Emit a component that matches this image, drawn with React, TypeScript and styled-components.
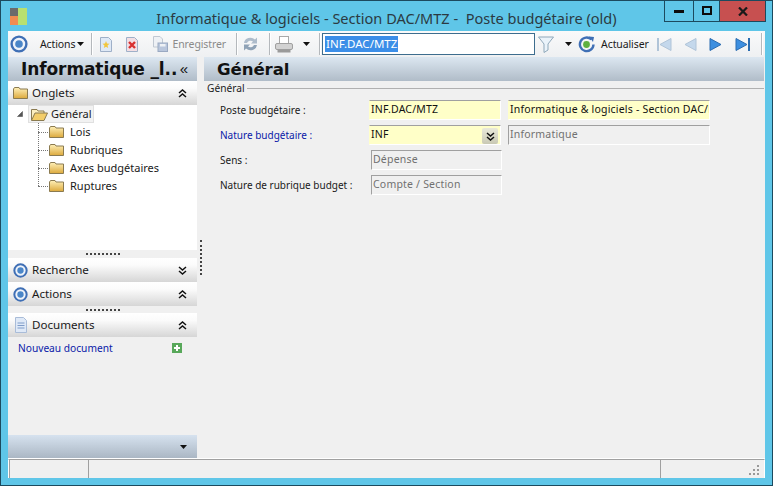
import React, { FunctionComponent } from 'react'
import styled, { createGlobalStyle } from 'styled-components'

const Global = createGlobalStyle`
    html, body, #root {
        margin: 0;
        padding: 0;
        width: 773px;
        height: 486px;
        overflow: hidden;
    }
    * { box-sizing: border-box; }
`

const Frame = styled.div`
    width: 773px;
    height: 486px;
    display: flex;
    flex-direction: column;
    background: #5fc6e8;
    border: 1px solid #1c4a5e;
    font-family: 'Noto Sans', 'Open Sans', sans-serif;
    font-size: 11px;
    color: #1a1a1a;
`
const TitleBar = styled.div`
    position: relative;
    height: 30px;
    flex: none;
    display: flex;
    align-items: center;
    justify-content: center;
    font-size: 14.55px;
    color: #2b3a42;
    white-space: pre;
    padding-top: 3px;
`
const AppLogo = styled.svg`
    position: absolute;
    left: 9px;
    top: 7px;
`
const WindowButtons = styled.div`
    position: absolute;
    top: 0;
    right: 6px;
    display: flex;
    height: 21px;
    border: 1px solid #1c4a5e;
    border-top: 0;
`
const WindowButton = styled.div<{ $w: number; $close?: boolean }>`
    width: ${p => p.$w}px;
    display: flex;
    align-items: center;
    justify-content: center;
    background: ${p => (p.$close ? '#c75050' : 'transparent')};
    border-left: 1px solid #1c4a5e;
    &:first-child { border-left: 0; }
`
const Body = styled.div`
    flex: 1;
    margin: 0 7px;
    display: flex;
    flex-direction: column;
    background: #f0f0f0;
    min-height: 0;
`
const Toolbar = styled.div`
    height: 26px;
    flex: none;
    display: flex;
    align-items: center;
    padding-left: 2px;
    background: linear-gradient(#fafafa, #eef0f2);
`
const ToolItem = styled.div<{ $ml?: number; $disabled?: boolean }>`
    display: flex;
    align-items: center;
    margin-left: ${p => p.$ml ?? 0}px;
    color: ${p => (p.$disabled ? '#8a8a8a' : '#1a1a1a')};
    font-size: 10.5px;
    letter-spacing: -0.1px;
    white-space: nowrap;
`
const ToolSep = styled.div<{ $ml: number }>`
    width: 1px;
    height: 22px;
    margin-left: ${p => p.$ml}px;
    background: #b4b8bc;
    box-shadow: 1px 0 0 #fff;
`
const SearchInput = styled.div`
    width: 213px;
    height: 22px;
    margin-left: 2px;
    padding: 2px 0 0 2px;
    background: #fff;
    border: 1px solid #3d6d8e;
    font-size: 11.5px;
    color: #fff;
    line-height: 16px;
`
const Selected = styled.span`
    display: inline-block;
    background: #3b8ee8;
    height: 16px;
    padding: 0 1px;
`
const Main = styled.div`
    flex: 1;
    display: flex;
    min-height: 0;
`
const Side = styled.div`
    width: 189px;
    flex: none;
    display: flex;
    flex-direction: column;
`
const HeaderStrip = styled.div`
    height: 24px;
    flex: none;
    display: flex;
    align-items: center;
    font-family: 'DejaVu Sans', sans-serif;
    font-weight: bold;
    font-size: 16.6px;
    color: #111;
    background: linear-gradient(#dce7f1, #b0bcc8);
    letter-spacing: -0.1px;
`
const SideTitle = styled(HeaderStrip)`
    justify-content: space-between;
    padding: 0 9px 0 13px;
    font-size: 17px;
`
const Collapse = styled.span`
    font-family: 'Liberation Sans', sans-serif;
    font-weight: normal;
    font-size: 15px;
    line-height: 16px;
`
const SectionBar = styled.div`
    height: 24px;
    flex: none;
    display: flex;
    align-items: center;
    padding: 0 10px 0 5px;
    gap: 4px;
    font-size: 11.6px;
    background: linear-gradient(#ffffff, #fbfbfb 30%, #d6d6d6);
`
const SectionName = styled.span`
    flex: 1;
    padding-bottom: 2px;
`
const Tree = styled.div`
    height: 145px;
    flex: none;
    background: #fff;
`
const RootRow = styled.div`
    display: flex;
    align-items: center;
    height: 18px;
    padding-left: 9px;
`
const Expander = styled.svg`
    flex: none;
    margin-right: 5px;
`
const RootLabel = styled.div`
    display: flex;
    align-items: center;
    gap: 3px;
    height: 18px;
    width: 66px;
    padding-left: 2px;
    background: #f2f2f2;
    border: 1px solid #e0e0e0;
    font-size: 11px;
`
const TreeText = styled.span`
    padding-bottom: 2px;
`
const Children = styled.div`
    position: relative;
    padding-left: 41px;
    &::before {
        content: '';
        position: absolute;
        left: 30px;
        top: 0;
        height: 63px;
        border-left: 1px dotted #777;
    }
`
const ChildRow = styled.div`
    position: relative;
    display: flex;
    align-items: center;
    gap: 6px;
    height: 18px;
    font-size: 11px;
    &::before {
        content: '';
        position: absolute;
        left: -11px;
        top: 9px;
        width: 10px;
        border-top: 1px dotted #777;
    }
`
const Splitter = styled.div<{ $h: number }>`
    height: ${p => p.$h}px;
    flex: none;
    display: flex;
    align-items: center;
    justify-content: center;
    &::before {
        content: '';
        width: 34px;
        border-top: 2px dotted #444;
    }
`
const NewDocRow = styled.div`
    display: flex;
    align-items: center;
    justify-content: space-between;
    padding: 0 15px 0 10px;
    height: 21px;
    color: #0a1aa8;
    font-size: 10.2px;
`
const Spacer = styled.div`
    flex: 1;
`
const SideFooter = styled.div`
    height: 24px;
    flex: none;
    display: flex;
    align-items: center;
    justify-content: flex-end;
    padding-right: 9px;
    background: linear-gradient(#d6e2ef, #a9b5c2);
`
const Gutter = styled.div`
    width: 7px;
    flex: none;
    padding-top: 183px;
    &::before {
        content: '';
        display: block;
        height: 35px;
        width: 0;
        margin-left: 3px;
        border-left: 2px dotted #444;
    }
`
const Content = styled.div`
    flex: 1;
    display: flex;
    flex-direction: column;
    margin-right: 1px;
`
const ContentTitle = styled(HeaderStrip)`
    padding-left: 13px;
`
const FormArea = styled.div`
    flex: 1;
    margin-left: -7px;
`
const Legend = styled.div`
    display: flex;
    align-items: center;
    gap: 2px;
    height: 14px;
    padding-left: 10px;
    color: #222;
    font-size: 10.2px;
    &::after {
        content: '';
        flex: 1;
        border-top: 1px solid #b0b0b0;
    }
`
const FormGrid = styled.div`
    display: grid;
    grid-template-columns: 142px 132px 202px;
    grid-auto-rows: 25px;
    column-gap: 7px;
    margin: 5px 0 0 23px;
    width: max-content;
`
const FieldLabel = styled.div<{ $required?: boolean }>`
    display: flex;
    align-items: center;
    height: 20px;
    font-size: 10px;
    color: ${p => (p.$required ? '#0a1aa8' : '#1a1a1a')};
    white-space: nowrap;
`
const Field = styled.div<{ $readOnly?: boolean }>`
    height: 20px;
    display: flex;
    align-items: flex-start;
    justify-content: space-between;
    overflow: hidden;
    white-space: nowrap;
    font-size: 10.5px;
    padding: 1px 0 0 1px;
    letter-spacing: 0.2px;
    background: ${p => (p.$readOnly ? '#f0f0f0' : '#ffffc8')};
    color: ${p => (p.$readOnly ? '#707070' : '#111')};
    border-top: 1px solid #a0a0a0;
    border-left: 1px solid ${p => (p.$readOnly ? '#a0a0a0' : '#ffffc8')};
    border-right: 1px solid #fff;
    border-bottom: 1px solid #fff;
`
const ReadOnlyCell = styled(Field)`
    margin-left: 2px;
    margin-right: -1px;
`
const PickButton = styled.div`
    width: 16px;
    height: 16px;
    margin: 1px 2px 0 0;
    display: flex;
    align-items: center;
    justify-content: center;
    background: linear-gradient(#e9e9da, #c9c9b4);
    border-radius: 2px;
`
const StatusBar = styled.div`
    height: 19px;
    flex: none;
    display: flex;
    background: #f0f0f0;
    border-top: 1px solid #a0a0a0;
    box-shadow: 0 -1px 0 #fff;
    border-left: 1px solid #fff;
    border-right: 1px solid #fff;
    position: relative;
`
const StatusCell = styled.div<{ $w?: number }>`
    ${p => (p.$w ? `width: ${p.$w}px;` : 'flex: 1;')}
    border-left: 1px solid #a0a0a0;
`
const Grip = styled.svg`
    position: absolute;
    right: 4px;
    bottom: 2px;
`
const BottomEdge = styled.div`
    height: 7px;
    flex: none;
`

const Radio: FunctionComponent<{ size?: number }> = ({ size = 18 }) => (
    <svg width={size} height={size} viewBox='0 0 18 18' style={{ flex: 'none' }}>
        <circle cx='9' cy='9' r='7.4' fill='#eef3fa' stroke='#3f6fb5' strokeWidth='2.4' />
        <circle cx='9' cy='9' r='3.8' fill='#4a86c8' />
    </svg>
)
const Folder: FunctionComponent = () => (
    <svg width='15' height='12' viewBox='0 0 15 12' style={{ flex: 'none' }}>
        <defs>
            <linearGradient id='fold' x1='0' y1='0' x2='0' y2='1'>
                <stop offset='0' stopColor='#fff0b8' />
                <stop offset='1' stopColor='#dca93c' />
            </linearGradient>
        </defs>
        <path d='M.5 2 L1.5 .5 H6 L7 2 H14.5 V11.5 H.5 Z' fill='url(#fold)' stroke='#8a7a50' strokeWidth='1' />
    </svg>
)
const OpenFolder: FunctionComponent = () => (
    <svg width='17' height='13' viewBox='0 0 17 13' style={{ flex: 'none' }}>
        <path d='M.5 12 V1.5 H6 L7 3 H13 V5' fill='#fbeec0' stroke='#8a7a50' />
        <path d='M.5 12.5 L4 5 H16.5 L13 12.5 Z' fill='#f3cd6a' stroke='#8a7a50' />
    </svg>
)
const Chevrons: FunctionComponent<{ up?: boolean }> = ({ up }) => (
    <svg width='9' height='9' viewBox='0 0 9 9' style={{ flex: 'none', transform: up ? undefined : 'rotate(180deg)' }}>
        <path d='M1 4 L4.5 1 L8 4 M1 8 L4.5 5 L8 8' fill='none' stroke='#111' strokeWidth='1.5' />
    </svg>
)
const Caret: FunctionComponent<{ w?: number }> = ({ w = 7 }) => (
    <svg width={w} height='4' viewBox='0 0 7 4' style={{ flex: 'none' }}>
        <path d='M0 0 H7 L3.5 4 Z' fill='#111' />
    </svg>
)
const DocBase: FunctionComponent<{ fill: string; children?: React.ReactNode }> = ({ fill, children }) => (
    <svg width='14' height='15' viewBox='0 0 14 15' style={{ flex: 'none' }}>
        <path d='M1.5 .5 H9.5 L12.5 3.5 V14.5 H1.5 Z' fill={fill} stroke='#9fb0c8' />
        {children}
    </svg>
)
const NavArrow: FunctionComponent<{ dir: 'l' | 'r'; bar?: boolean; on?: boolean }> = ({ dir, bar, on }) => {
    const fill = on ? '#3d8fe0' : '#c4d8ec'
    const stroke = on ? '#2a6cb0' : '#b0c4d8'
    return (
        <svg
            width={bar ? 16 : 13}
            height='15'
            viewBox={bar ? '0 0 16 15' : '0 0 13 15'}
            style={{ flex: 'none', transform: dir === 'l' ? 'scaleX(-1)' : undefined }}
        >
            <path d='M1 1.5 L12 7.5 L1 13.5 Z' fill={fill} stroke={stroke} />
            {bar && <rect x='13' y='1' width='2' height='13' fill={stroke} />}
        </svg>
    )
}

const App: FunctionComponent = () => (
    <Frame>
        <Global />
        <TitleBar>
            <AppLogo width='17' height='17' viewBox='0 0 17 17'>
                <rect x='0' y='0' width='8' height='8' fill='#6b6b6b' />
                <rect x='0' y='8' width='8' height='9' fill='#f08c50' />
                <rect x='8' y='0' width='9' height='17' fill='#b8e070' />
            </AppLogo>
            {'Informatique & logiciels - Section DAC/MTZ -  Poste budgétaire (old)'}
            <WindowButtons>
                <WindowButton $w={28}>
                    <svg width='10' height='4'><rect width='10' height='3' y='1' fill='#0c0c0c' /></svg>
                </WindowButton>
                <WindowButton $w={26}>
                    <svg width='10' height='10'><rect x='1' y='1' width='8' height='7' fill='none' stroke='#0c0c0c' strokeWidth='2' /></svg>
                </WindowButton>
                <WindowButton $w={46} $close>
                    <svg width='10' height='9' viewBox='0 0 10 9'><path d='M1 .5 L9 8.5 M9 .5 L1 8.5' stroke='#1a1a1a' strokeWidth='2.2' /></svg>
                </WindowButton>
            </WindowButtons>
        </TitleBar>
        <Body>
            <Toolbar>
                <ToolItem><Radio /></ToolItem>
                <ToolItem $ml={12}>Actions</ToolItem>
                <ToolItem $ml={2}><Caret /></ToolItem>
                <ToolSep $ml={7} />
                <ToolItem $ml={7}>
                    <DocBase fill='#dfe9f6'><path d='M7 4 L8 6.5 L10.5 6.8 L8.5 8.5 L9.2 11 L7 9.7 L4.8 11 L5.5 8.5 L3.5 6.8 L6 6.5 Z' fill='#f2c63c' /></DocBase>
                </ToolItem>
                <ToolItem $ml={12}>
                    <DocBase fill='#f3dfe4'><path d='M4 5 L10 11 M10 5 L4 11' stroke='#d83030' strokeWidth='2.4' /></DocBase>
                </ToolItem>
                <ToolItem $ml={13}>
                    <svg width='16' height='16' viewBox='0 0 16 16' style={{ flex: 'none' }}>
                        <path d='M1.5 .5 H8 L10.5 3 V11 H1.5 Z' fill='#eef1f5' stroke='#c0c8d2' />
                        <rect x='6' y='7' width='9.5' height='8.5' fill='#b9c6dc' stroke='#9aa9c2' />
                        <rect x='8' y='8' width='5.5' height='2.5' fill='#eef1f5' />
                    </svg>
                </ToolItem>
                <ToolItem $ml={4} $disabled>Enregistrer</ToolItem>
                <ToolSep $ml={10} />
                <ToolItem $ml={5}>
                    <svg width='17' height='16' viewBox='0 0 17 16' style={{ flex: 'none' }}>
                        <path d='M2 7 A6.5 6 0 0 1 13 3.5 L15 1.5 V7.5 H9 L11 5.5 A4 4 0 0 0 5 7 Z' fill='#aebccb' />
                        <path d='M15 9 A6.5 6 0 0 1 4 12.5 L2 14.5 V8.5 H8 L6 10.5 A4 4 0 0 0 12 9 Z' fill='#8fa2b6' />
                    </svg>
                </ToolItem>
                <ToolSep $ml={10} />
                <ToolItem $ml={5}>
                    <svg width='18' height='17' viewBox='0 0 18 17' style={{ flex: 'none' }}>
                        <rect x='4.5' y='.5' width='9' height='7' fill='#fff' stroke='#a8a8a8' />
                        <rect x='.5' y='7.5' width='17' height='6' rx='1.5' fill='#d2d2d2' stroke='#a0a0a0' />
                        <rect x='2.5' y='13.5' width='13' height='3' fill='#9a9a9a' />
                    </svg>
                </ToolItem>
                <ToolItem $ml={10}><Caret /></ToolItem>
                <ToolSep $ml={9} />
                <SearchInput><Selected>INF.DAC/MTZ</Selected></SearchInput>
                <ToolItem $ml={3}>
                    <svg width='16' height='17' viewBox='0 0 16 17' style={{ flex: 'none' }}>
                        <path d='M.5 1 H15.5 L10 8 V14 L6 16.5 V8 Z' fill='#eaf3fa' stroke='#8fa8ba' />
                    </svg>
                </ToolItem>
                <ToolItem $ml={11}><Caret /></ToolItem>
                <ToolItem $ml={6}>
                    <svg width='17' height='17' viewBox='0 0 17 17' style={{ flex: 'none' }}>
                        <path d='M13.5 3.5 A6.8 6.8 0 1 0 15.5 8.5' fill='none' stroke='#3f6fb5' strokeWidth='2.4' />
                        <path d='M11 .5 L16 1 L15 6 Z' fill='#3f6fb5' />
                        <circle cx='8.5' cy='8.5' r='3.4' fill='#5fb040' />
                    </svg>
                </ToolItem>
                <ToolItem $ml={6}>Actualiser</ToolItem>
                <ToolItem $ml={7}><NavArrow dir='l' bar /></ToolItem>
                <ToolItem $ml={12}><NavArrow dir='l' /></ToolItem>
                <ToolItem $ml={12}><NavArrow dir='r' on /></ToolItem>
                <ToolItem $ml={13}><NavArrow dir='r' bar on /></ToolItem>
                <ToolSep $ml={10} />
            </Toolbar>
            <Main>
                <Side>
                    <SideTitle>
                        Informatique _l..
                        <Collapse>«</Collapse>
                    </SideTitle>
                    <SectionBar>
                        <Folder />
                        <SectionName>Onglets</SectionName>
                        <Chevrons up />
                    </SectionBar>
                    <Tree>
                        <RootRow>
                            <Expander width='6' height='6' viewBox='0 0 6 6'>
                                <path d='M5.5 .5 V5.5 H.5 Z' fill='#555' stroke='#555' strokeWidth='.6' />
                            </Expander>
                            <RootLabel>
                                <OpenFolder />
                                <TreeText>Général</TreeText>
                            </RootLabel>
                        </RootRow>
                        <Children>
                            {['Lois', 'Rubriques', 'Axes budgétaires', 'Ruptures'].map(name => (
                                <ChildRow key={name}>
                                    <Folder />
                                    <TreeText>{name}</TreeText>
                                </ChildRow>
                            ))}
                        </Children>
                    </Tree>
                    <Splitter $h={8} />
                    <SectionBar>
                        <Radio size={15} />
                        <SectionName>Recherche</SectionName>
                        <Chevrons />
                    </SectionBar>
                    <SectionBar>
                        <Radio size={15} />
                        <SectionName>Actions</SectionName>
                        <Chevrons up />
                    </SectionBar>
                    <Splitter $h={7} />
                    <SectionBar>
                        <svg width='14' height='16' viewBox='0 0 14 16' style={{ flex: 'none', marginLeft: 1 }}>
                            <path d='M1.5 .5 H9.5 L12.5 3.5 V15.5 H1.5 Z' fill='#dfe9f7' stroke='#a9bcd8' />
                            <path d='M3.5 6 H10.5 M3.5 8.5 H10.5 M3.5 11 H10.5' stroke='#7f9cc8' />
                        </svg>
                        <SectionName>Documents</SectionName>
                        <Chevrons up />
                    </SectionBar>
                    <NewDocRow>
                        Nouveau document
                        <svg width='10' height='10' viewBox='0 0 10 10'>
                            <rect width='10' height='10' fill='#58a85a' />
                            <path d='M5 2 V8 M2 5 H8' stroke='#fff' strokeWidth='2' />
                        </svg>
                    </NewDocRow>
                    <Spacer />
                    <SideFooter><Caret w={9} /></SideFooter>
                </Side>
                <Gutter />
                <Content>
                    <ContentTitle>Général</ContentTitle>
                    <FormArea>
                        <Legend>Général</Legend>
                        <FormGrid>
                            <FieldLabel>Poste budgétaire :</FieldLabel>
                            <Field>INF.DAC/MTZ</Field>
                            <Field>Informatique &amp; logiciels - Section DAC/MTZ</Field>
                            <FieldLabel $required>Nature budgétaire :</FieldLabel>
                            <Field>
                                INF
                                <PickButton><Chevrons /></PickButton>
                            </Field>
                            <Field $readOnly>Informatique</Field>
                            <FieldLabel>Sens :</FieldLabel>
                            <ReadOnlyCell $readOnly>Dépense</ReadOnlyCell>
                            <div />
                            <FieldLabel>Nature de rubrique budget :</FieldLabel>
                            <ReadOnlyCell $readOnly>Compte / Section</ReadOnlyCell>
                            <div />
                        </FormGrid>
                    </FormArea>
                </Content>
            </Main>
            <StatusBar>
                <StatusCell $w={79} />
                <StatusCell $w={572} />
                <StatusCell />
                <Grip width='11' height='11' viewBox='0 0 11 11'>
                    <path d='M8 0h2v2H8zM4 4h2v2H4zM8 4h2v2H8zM0 8h2v2H0zM4 8h2v2H4zM8 8h2v2H8z' fill='#999' />
                </Grip>
            </StatusBar>
        </Body>
        <BottomEdge />
    </Frame>
)
export default App
